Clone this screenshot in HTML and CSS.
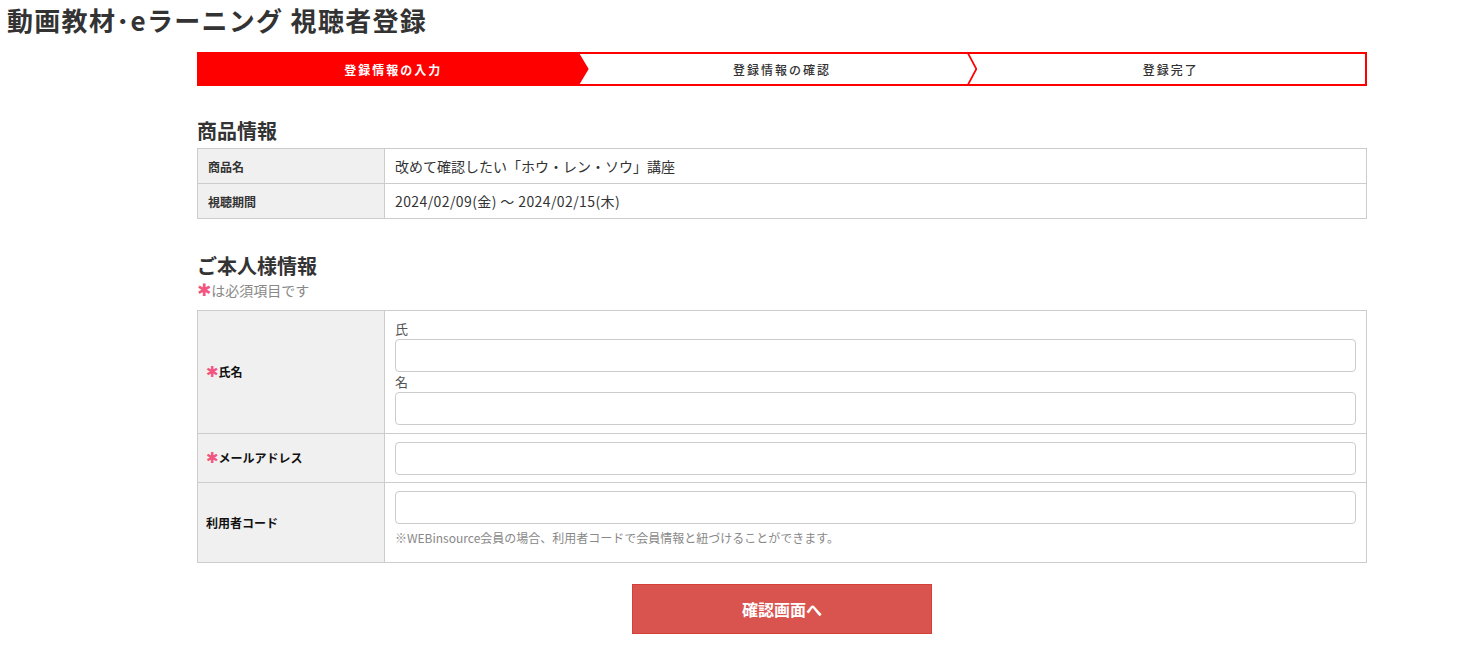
FILE: index.html
```html
<!DOCTYPE html>
<html lang="ja">
<head>
    <meta charset="UTF-8">
    <title>動画教材･eラーニング 視聴者登録</title>
    <link rel="stylesheet" href="styles.css">
</head>
<body>
    <h1 class="page-title">動画教材･eラーニング 視聴者登録</h1>

    <div class="container">
        <ol class="steps">
            <li class="step active">登録情報の入力</li>
            <li class="step divided">登録情報の確認</li>
            <li class="step">登録完了</li>
        </ol>

        <h2 class="section-title first">商品情報</h2>
        <table class="info-table">
            <tr>
                <th>商品名</th>
                <td>改めて確認したい「ホウ・レン・ソウ」講座</td>
            </tr>
            <tr>
                <th>視聴期間</th>
                <td class="period">2024/02/09(金) ～ 2024/02/15(木)</td>
            </tr>
        </table>

        <h2 class="section-title">ご本人様情報</h2>
        <p class="required-note"><span class="req">✱</span>は必須項目です</p>
        <table class="form-table">
            <tr class="row-name">
                <th><span class="req">✱</span>氏名</th>
                <td>
                    <label class="sub-label" for="lastName">氏</label>
                    <input type="text" id="lastName">
                    <label class="sub-label" for="firstName">名</label>
                    <input type="text" id="firstName">
                </td>
            </tr>
            <tr class="row-mail">
                <th><span class="req">✱</span>メールアドレス</th>
                <td><input type="email" id="email"></td>
            </tr>
            <tr class="row-code">
                <th>利用者コード</th>
                <td>
                    <input type="text" id="userCode">
                    <p class="hint">※WEBinsource会員の場合、利用者コードで会員情報と紐づけることができます。</p>
                </td>
            </tr>
        </table>

        <div class="actions">
            <button type="button" class="submit-btn">確認画面へ</button>
        </div>
    </div>
</body>
</html>
```

FILE: styles.css
```css
* {
    margin: 0;
    padding: 0;
    box-sizing: border-box;
}

body {
    font-family: "Noto Sans CJK JP", "Liberation Sans", sans-serif;
    color: #333;
    background: #fff;
}

.page-title {
    font-size: 26px;
    line-height: 40px;
    font-weight: 700;
    letter-spacing: 1.3px;
    padding: 0 7px;
    color: #333;
}

.container {
    width: 1170px;
    margin: 12px 0 0 197px;
}

/* ステップ */
.steps {
    list-style: none;
    display: flex;
    height: 34px;
    border: 2px solid #ff0000;
}

.step {
    flex: 1;
    position: relative;
    display: flex;
    align-items: center;
    justify-content: center;
    font-size: 12px;
    letter-spacing: 2px;
    font-weight: 500;
    color: #333;
}

.step.active {
    background: #ff0000;
    color: #fff;
    font-weight: 700;
    clip-path: polygon(0 0, calc(100% - 9px) 0, 100% 50%, calc(100% - 9px) 100%, 0 100%);
}

.step:first-child + .step::before,
.step.divided::after {
    content: '';
    position: absolute;
    top: 0;
    bottom: 0;
    width: 10px;
    background: #ff0000;
    clip-path: polygon(0 0, 2px 0, 100% 50%, 2px 100%, 0 100%, calc(100% - 2px) 50%);
}

.step:first-child + .step::before {
    left: -10px;
    width: 11px;
}

.step.divided::after {
    right: -1px;
}

/* 見出し */
.section-title {
    font-size: 20px;
    line-height: 30px;
    font-weight: 700;
    margin-top: 32px;
}

.section-title.first {
    margin-top: 30px;
    margin-bottom: 2px;
}

.required-note {
    font-size: 14px;
    line-height: 18px;
    color: #888;
    margin-bottom: 11px;
}

.req {
    color: #f2557f;
    font-family: "DejaVu Sans", sans-serif;
    font-size: 15px;
    font-weight: 700;
}

.required-note .req {
    font-size: 17px;
}

/* テーブル */
table {
    width: 100%;
    border-collapse: collapse;
}

th, td {
    border: 1px solid #ccc;
    text-align: left;
    vertical-align: middle;
}

th {
    width: 187px;
    background: #f0f0f0;
    font-size: 12px;
    font-weight: 700;
    padding: 0 10px;
}

.info-table tr {
    height: 35px;
}

.info-table td {
    font-size: 14px;
    padding: 0 10px;
}

.info-table .period {
    letter-spacing: 0.4px;
}

.form-table th {
    padding: 0 8px;
    color: #111;
}

.form-table td {
    padding: 8px 10px 8px;
}

.row-mail td {
    padding-bottom: 7px;
}

.row-code td {
    padding-bottom: 15px;
}

.sub-label {
    display: block;
    font-size: 13px;
    line-height: 20px;
    color: #555;
}

input {
    display: block;
    width: 100%;
    height: 33px;
    border: 1px solid #ccc;
    border-radius: 4px;
    padding: 4px 8px;
    font-size: 14px;
    font-family: inherit;
    background: #fff;
}

input:focus {
    outline: none;
    border-color: #999;
}

.hint {
    margin-top: 5px;
    font-size: 12px;
    line-height: 18px;
    color: #888;
}

/* ボタン */
.actions {
    display: flex;
    justify-content: center;
    margin-top: 21px;
}

.submit-btn {
    width: 300px;
    height: 50px;
    background: #d9534f;
    border: 1px solid #d43f3a;
    color: #fff;
    font-size: 16px;
    font-weight: 700;
    font-family: inherit;
    cursor: pointer;
}

.submit-btn:hover {
    background: #c9302c;
}
```
